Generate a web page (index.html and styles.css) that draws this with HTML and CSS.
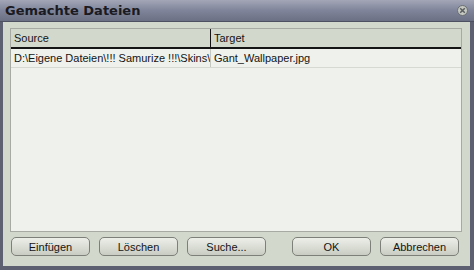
FILE: index.html
```html
<!DOCTYPE html>
<html lang="de">

<head>
    <meta charset="UTF-8">
    <title>Gemachte Dateien</title>
    <link rel="stylesheet" href="styles.css">
</head>

<body>
    <div class="window">
        <div class="titlebar">
            <span class="title">Gemachte Dateien</span>
            <span class="close">
                <svg width="11" height="11" viewBox="0 0 11 11">
                    <circle cx="5.5" cy="5.5" r="5" fill="#c4c8c0" stroke="#6a6e70" stroke-width="1"/>
                    <path d="M3.2 3.2 L7.8 7.8 M7.8 3.2 L3.2 7.8" stroke="#5a5e60" stroke-width="1.5"/>
                </svg>
            </span>
        </div>

        <div class="body">
            <div class="list">
                <div class="list-head">
                    <div class="col col-source">Source</div>
                    <div class="col col-target">Target</div>
                </div>
                <div class="list-row">
                    <div class="col col-source">D:\Eigene Dateien\!!! Samurize !!!\Skins\</div>
                    <div class="col col-target">Gant_Wallpaper.jpg</div>
                </div>
            </div>

            <div class="buttons">
                <button class="btn">Einfügen</button>
                <button class="btn">Löschen</button>
                <button class="btn">Suche...</button>
                <span class="spacer"></span>
                <button class="btn">OK</button>
                <button class="btn">Abbrechen</button>
            </div>
        </div>
    </div>
</body>

</html>
```

FILE: styles.css
```css
body {
    margin: 0;
    padding: 0;
    font-family: 'Liberation Sans', sans-serif;
    font-size: 11px;
    background: #5c6070;
}

.window {
    width: 474px;
    height: 270px;
    display: flex;
    flex-direction: column;
    box-sizing: border-box;
    background: #5c6070;
}

/* Titelleiste */
.titlebar {
    height: 22px;
    flex: none;
    display: flex;
    align-items: center;
    justify-content: space-between;
    padding: 0 6px 0 5px;
    background: linear-gradient(#a2a6b6, #80849a 50%, #6c7084);
    border-bottom: 1px solid #4c5060;
    box-sizing: border-box;
}

.title {
    font-family: 'DejaVu Sans', sans-serif;
    font-weight: bold;
    font-size: 13px;
    color: #1a1a22;
}

.close {
    display: flex;
}

.body {
    flex: 1;
    margin: 0 4px 4px 3px;
    background: #d3d8cc;
    display: flex;
    flex-direction: column;
    padding: 6px 8px 0 7px;
}

/* Liste */
.list {
    height: 204px;
    background: #eff1ec;
    border: 1px solid #a6aaa2;
    box-sizing: border-box;
}

.list-head {
    display: flex;
    height: 20px;
    background: #d3d8cc;
    border-bottom: 2px solid #141414;
    box-sizing: border-box;
}

.list-head .col-source {
    border-right: 1px solid #141414;
}

.list-row {
    display: flex;
    height: 19px;
    border-bottom: 1px solid #d6d9d2;
    box-sizing: border-box;
}

.list-row .col-source {
    border-right: 1px solid #c4c8c0;
}

.col {
    color: #141414;
    font-size: 11px;
    line-height: 18px;
    padding-left: 3px;
    white-space: nowrap;
    overflow: hidden;
    box-sizing: border-box;
}

.col-source {
    width: 200px;
}

.col-target {
    flex: 1;
}

/* Knöpfe */
.buttons {
    display: flex;
    gap: 9px;
    padding-top: 5px;
    padding-left: 1px;
}

.spacer {
    width: 8px;
}

.btn {
    width: 79px;
    height: 19px;
    padding: 0;
    font-family: 'Liberation Sans', sans-serif;
    font-size: 11px;
    color: #141414;
    background: linear-gradient(#eceee8, #d8dbd2 60%, #c8ccc2);
    border: 1px solid #7c8078;
    border-radius: 5px;
    cursor: pointer;
}
```
